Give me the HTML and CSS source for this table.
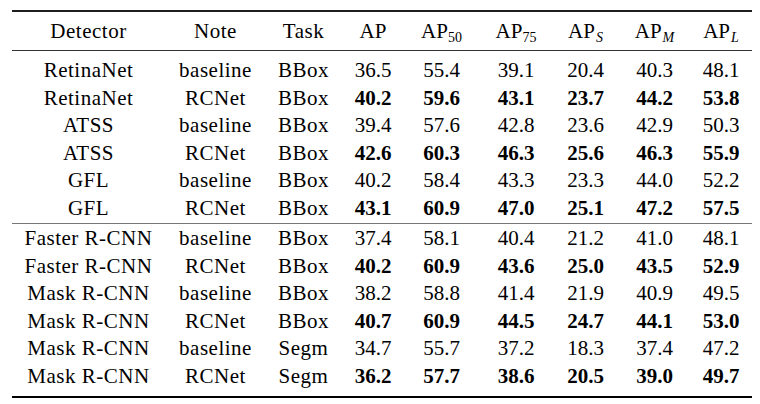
FILE: index.html
```html
<!DOCTYPE html>
<html>
<head>
<meta charset="utf-8">
<link rel="stylesheet" href="styles.css">
</head>
<body>
<div class="results">
  <div class="row head">
    <div class="cell t">Detector</div><div class="cell t">Note</div><div class="cell t">Task</div><div class="cell">AP</div>
    <div class="cell">AP<sub>50</sub></div><div class="cell">AP<sub>75</sub></div>
    <div class="cell">AP<sub class="it">S</sub></div><div class="cell">AP<sub class="it">M</sub></div><div class="cell last">AP<sub class="it">L</sub></div>
  </div>
  <div class="group first">
    <div class="row"><div class="cell t">RetinaNet</div><div class="cell t">baseline</div><div class="cell t">BBox</div><div class="cell">36.5</div><div class="cell">55.4</div><div class="cell">39.1</div><div class="cell">20.4</div><div class="cell">40.3</div><div class="cell last">48.1</div></div>
    <div class="row"><div class="cell t">RetinaNet</div><div class="cell t">RCNet</div><div class="cell t">BBox</div><div class="cell b">40.2</div><div class="cell b">59.6</div><div class="cell b">43.1</div><div class="cell b">23.7</div><div class="cell b">44.2</div><div class="cell b last">53.8</div></div>
    <div class="row"><div class="cell t">ATSS</div><div class="cell t">baseline</div><div class="cell t">BBox</div><div class="cell">39.4</div><div class="cell">57.6</div><div class="cell">42.8</div><div class="cell">23.6</div><div class="cell">42.9</div><div class="cell last">50.3</div></div>
    <div class="row"><div class="cell t">ATSS</div><div class="cell t">RCNet</div><div class="cell t">BBox</div><div class="cell b">42.6</div><div class="cell b">60.3</div><div class="cell b">46.3</div><div class="cell b">25.6</div><div class="cell b">46.3</div><div class="cell b last">55.9</div></div>
    <div class="row"><div class="cell t">GFL</div><div class="cell t">baseline</div><div class="cell t">BBox</div><div class="cell">40.2</div><div class="cell">58.4</div><div class="cell">43.3</div><div class="cell">23.3</div><div class="cell">44.0</div><div class="cell last">52.2</div></div>
    <div class="row"><div class="cell t">GFL</div><div class="cell t">RCNet</div><div class="cell t">BBox</div><div class="cell b">43.1</div><div class="cell b">60.9</div><div class="cell b">47.0</div><div class="cell b">25.1</div><div class="cell b">47.2</div><div class="cell b last">57.5</div></div>
  </div>
  <div class="group second">
    <div class="row"><div class="cell t">Faster R-CNN</div><div class="cell t">baseline</div><div class="cell t">BBox</div><div class="cell">37.4</div><div class="cell">58.1</div><div class="cell">40.4</div><div class="cell">21.2</div><div class="cell">41.0</div><div class="cell last">48.1</div></div>
    <div class="row"><div class="cell t">Faster R-CNN</div><div class="cell t">RCNet</div><div class="cell t">BBox</div><div class="cell b">40.2</div><div class="cell b">60.9</div><div class="cell b">43.6</div><div class="cell b">25.0</div><div class="cell b">43.5</div><div class="cell b last">52.9</div></div>
    <div class="row"><div class="cell t">Mask R-CNN</div><div class="cell t">baseline</div><div class="cell t">BBox</div><div class="cell">38.2</div><div class="cell">58.8</div><div class="cell">41.4</div><div class="cell">21.9</div><div class="cell">40.9</div><div class="cell last">49.5</div></div>
    <div class="row"><div class="cell t">Mask R-CNN</div><div class="cell t">RCNet</div><div class="cell t">BBox</div><div class="cell b">40.7</div><div class="cell b">60.9</div><div class="cell b">44.5</div><div class="cell b">24.7</div><div class="cell b">44.1</div><div class="cell b last">53.0</div></div>
    <div class="row"><div class="cell t">Mask R-CNN</div><div class="cell t">baseline</div><div class="cell t">Segm</div><div class="cell">34.7</div><div class="cell">55.7</div><div class="cell">37.2</div><div class="cell">18.3</div><div class="cell">37.4</div><div class="cell last">47.2</div></div>
    <div class="row"><div class="cell t">Mask R-CNN</div><div class="cell t">RCNet</div><div class="cell t">Segm</div><div class="cell b">36.2</div><div class="cell b">57.7</div><div class="cell b">38.6</div><div class="cell b">20.5</div><div class="cell b">39.0</div><div class="cell b last">49.7</div></div>
  </div>
</div>
</body>
</html>
```
FILE: styles.css
```css
body {
  margin: 8px;
  padding: 2px 0 0 4px;
  font-family: "Liberation Serif", "Times New Roman", Times, serif;
  font-size: 21px;
  color: #000;
  background: #ffffff;
}

.results {
  width: 743px;
  border-top: 2px solid #1e1e1e;
  border-bottom: 2px solid #000;
}

.row {
  display: grid;
  grid-template-columns: 153px 101px 75px 64px 73px 76px 63px 75px 63px;
  align-items: center;
  height: 27.5px;
}

.row.head {
  height: 38px;
  border-bottom: 1px solid #333;
}

.cell {
  text-align: center;
  white-space: nowrap;
  font-family: "Liberation Serif", "Times New Roman", Times, serif;
}

.cell.t {
  letter-spacing: 0.5px;
}

.cell.last {
  padding-right: 5px;
}

.cell.b {
  font-weight: bold;
}

.cell sub {
  font-size: 14px;
  line-height: 0;
  vertical-align: -4px;
}

.cell sub.it {
  font-style: italic;
  margin-left: 1px;
}

.group.first {
  padding: 6px 0 1px;
  border-bottom: 1px solid #777;
}

.group.second {
  padding: 1px 0 6px;
}
```
